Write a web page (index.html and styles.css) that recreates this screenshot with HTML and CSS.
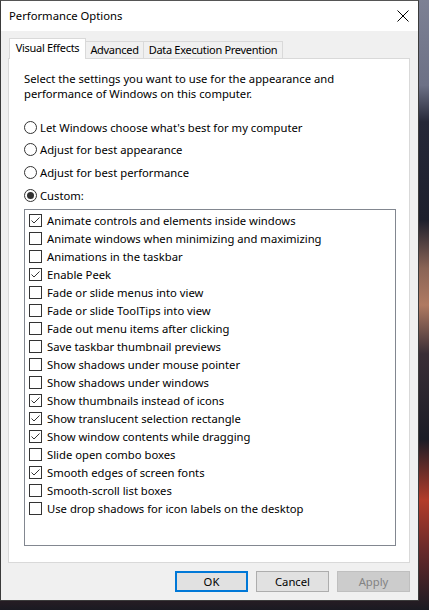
FILE: index.html
```html
<!DOCTYPE html>
<html>
<head>
<meta charset="utf-8">
<link rel="stylesheet" href="styles.css">
</head>
<body>
<div class="desk">
  <div class="window">
    <div class="titlebar">
      <span class="title">Performance Options</span>
      <svg class="close" width="12" height="12" viewBox="0 0 12 12"><path d="M0.5 0.5 L11.5 11.5 M11.5 0.5 L0.5 11.5" stroke="#000" stroke-width="1" fill="none"/></svg>
    </div>
    <div class="body">
      <div class="tabs">
        <div class="tab active t1">Visual Effects</div>
        <div class="tab t2">Advanced</div>
        <div class="tab t3">Data Execution Prevention</div>
      </div>
      <div class="panel">
        <p class="intro">Select the settings you want to use for the appearance and performance of Windows on this computer.</p>
        <div class="radios">
          <div class="radio"><span class="rb"></span>Let Windows choose what's best for my computer</div>
          <div class="radio"><span class="rb"></span>Adjust for best appearance</div>
          <div class="radio"><span class="rb"></span>Adjust for best performance</div>
          <div class="radio"><span class="rb on"></span>Custom:</div>
        </div>
        <div class="listbox">
          <div class="item"><span class="cb on"><svg viewBox="0 0 11 11" width="11" height="11"><path d="M1.5 5.5 L4 8 L9.5 2.5" stroke="#333" stroke-width="1" fill="none"/></svg></span>Animate controls and elements inside windows</div>
          <div class="item"><span class="cb"></span>Animate windows when minimizing and maximizing</div>
          <div class="item"><span class="cb"></span>Animations in the taskbar</div>
          <div class="item"><span class="cb on"><svg viewBox="0 0 11 11" width="11" height="11"><path d="M1.5 5.5 L4 8 L9.5 2.5" stroke="#333" stroke-width="1" fill="none"/></svg></span>Enable Peek</div>
          <div class="item"><span class="cb"></span>Fade or slide menus into view</div>
          <div class="item"><span class="cb"></span>Fade or slide ToolTips into view</div>
          <div class="item"><span class="cb"></span>Fade out menu items after clicking</div>
          <div class="item"><span class="cb"></span>Save taskbar thumbnail previews</div>
          <div class="item"><span class="cb"></span>Show shadows under mouse pointer</div>
          <div class="item"><span class="cb"></span>Show shadows under windows</div>
          <div class="item"><span class="cb on"><svg viewBox="0 0 11 11" width="11" height="11"><path d="M1.5 5.5 L4 8 L9.5 2.5" stroke="#333" stroke-width="1" fill="none"/></svg></span>Show thumbnails instead of icons</div>
          <div class="item"><span class="cb on"><svg viewBox="0 0 11 11" width="11" height="11"><path d="M1.5 5.5 L4 8 L9.5 2.5" stroke="#333" stroke-width="1" fill="none"/></svg></span>Show translucent selection rectangle</div>
          <div class="item"><span class="cb on"><svg viewBox="0 0 11 11" width="11" height="11"><path d="M1.5 5.5 L4 8 L9.5 2.5" stroke="#333" stroke-width="1" fill="none"/></svg></span>Show window contents while dragging</div>
          <div class="item"><span class="cb"></span>Slide open combo boxes</div>
          <div class="item"><span class="cb on"><svg viewBox="0 0 11 11" width="11" height="11"><path d="M1.5 5.5 L4 8 L9.5 2.5" stroke="#333" stroke-width="1" fill="none"/></svg></span>Smooth edges of screen fonts</div>
          <div class="item"><span class="cb"></span>Smooth-scroll list boxes</div>
          <div class="item"><span class="cb"></span>Use drop shadows for icon labels on the desktop</div>
        </div>
      </div>
      <div class="buttons">
        <button class="btn default">OK</button>
        <button class="btn">Cancel</button>
        <button class="btn disabled">Apply</button>
      </div>
    </div>
  </div>
</div>
</body>
</html>
```
FILE: styles.css
```css
html, body {
  margin: 0;
  padding: 0;
}
body {
  width: 429px;
  height: 610px;
  overflow: hidden;
  font-family: "Noto Sans", "Open Sans", sans-serif;
  font-size: 11.25px;
  color: #000;
  background: linear-gradient(180deg, #7d8194 0%, #6d7186 14%, #262838 20%, #1d1f2c 36%, #8a6456 44%, #b07a62 50%, #3a2e36 58%, #1b1c26 72%, #b33c2a 82%, #6a2a2a 90%, #1a1a22 100%);
}
.desk {
  width: 429px;
  height: 610px;
}
.window {
  width: 419px;
  height: 601px;
  box-sizing: border-box;
  border: 1px solid #3b3b3b;
  border-top-color: #555;
  background: #f0f0f0;
  display: flex;
  flex-direction: column;
}
.titlebar {
  height: 30px;
  background: #fff;
  display: flex;
  align-items: center;
  justify-content: space-between;
  padding: 0 9px 0 8px;
  flex: none;
}
.title {
  margin-top: -1px;
}
.close {
  margin-top: -1px;
}
.body {
  flex: 1;
  display: flex;
  flex-direction: column;
  padding: 7px 8px 8px 7px;
}
.tabs {
  display: flex;
  align-items: flex-end;
  padding-left: 1px;
  height: 20px;
  position: relative;
  z-index: 1;
}
.tab {
  height: 17px;
  box-sizing: border-box;
  border: 1px solid #d9d9d9;
  border-bottom: none;
  border-left: none;
  background: #f0f0f0;
  text-align: center;
  line-height: 16px;
  white-space: nowrap;
  font-size: 11px;
  letter-spacing: -0.3px;
  flex: none;
}
.tab.active {
  height: 21px;
  margin-bottom: -1px;
  border-left: 1px solid #d9d9d9;
  background: #fff;
  line-height: 18px;
}
.t1 { width: 77px; }
.t2 { width: 58px; }
.t3 { width: 139px; }
.panel {
  border: 1px solid #d9d9d9;
  background: #fff;
  height: 505px;
  box-sizing: border-box;
  padding: 12px 13px 0 15px;
  display: flex;
  flex-direction: column;
}
.intro {
  margin: 0;
  line-height: 15px;
}
.radios {
  margin-top: 15px;
  display: flex;
  flex-direction: column;
}
.radio {
  height: 22.6px;
  display: flex;
  align-items: center;
}
.rb {
  width: 13px;
  height: 13px;
  box-sizing: border-box;
  border: 1px solid #333;
  border-radius: 50%;
  margin-right: 3px;
  display: flex;
  align-items: center;
  justify-content: center;
  flex: none;
}
.rb.on::after {
  content: "";
  width: 7px;
  height: 7px;
  border-radius: 50%;
  background: #333;
}
.listbox {
  margin-top: 3px;
  border: 1px solid #828790;
  height: 337px;
  box-sizing: border-box;
  padding: 1px 4px 0;
}
.item {
  height: 18px;
  display: flex;
  align-items: center;
}
.cb {
  width: 13px;
  height: 13px;
  box-sizing: border-box;
  border: 1px solid #333;
  margin-right: 5px;
  flex: none;
  display: flex;
}
.cb svg {
  display: block;
}
.buttons {
  display: flex;
  justify-content: flex-end;
  gap: 8px;
  margin-top: 8px;
}
.btn {
  width: 73px;
  height: 21px;
  box-sizing: border-box;
  border: 1px solid #adadad;
  background: #e1e1e1;
  font-family: "Noto Sans", "Open Sans", sans-serif;
  font-size: 11.25px;
  color: #000;
  padding: 0;
  line-height: 17px;
}
.btn.default {
  border: 2px solid #0078d7;
}
.btn.disabled {
  background: #cccccc;
  border-color: #bfbfbf;
  color: #838383;
}
```
